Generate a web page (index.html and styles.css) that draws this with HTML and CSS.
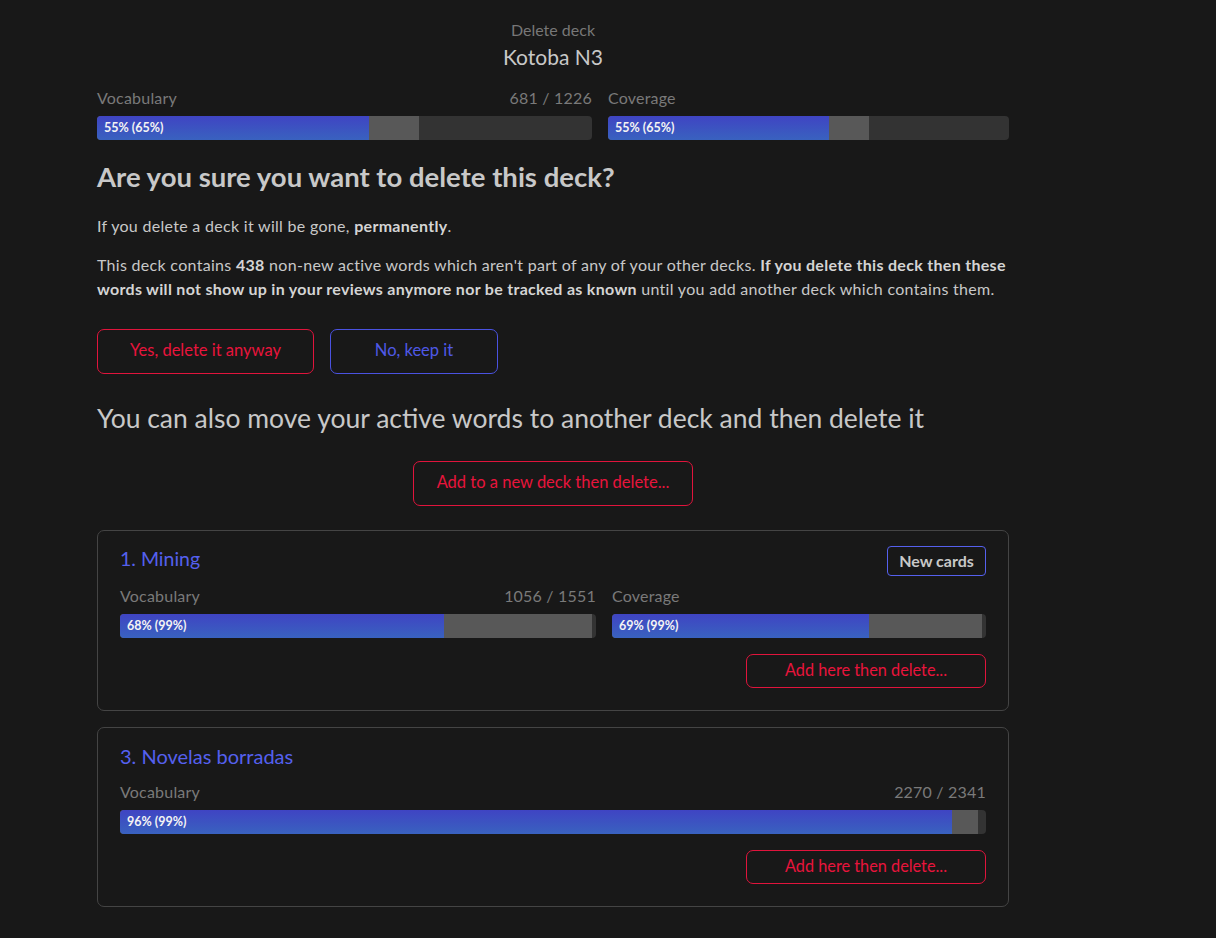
FILE: index.html
```html
<!DOCTYPE html>
<html lang="en">
<head>
<meta charset="utf-8">
<title>Delete deck</title>
<link rel="stylesheet" href="styles.css">
</head>
<body>
<main class="page">
  <header class="deck-head">
    <div class="deck-sub">Delete deck</div>
    <div class="deck-name">Kotoba N3</div>
  </header>

  <div class="stats">
    <div class="stat stat-vocab-top">
      <div class="stat-label"><span>Vocabulary</span><span>681 / 1226</span></div>
      <div class="bar">
        <div class="bar-known" style="width:65%"></div>
        <div class="bar-fill" style="width:55%"></div>
        <span class="bar-text">55% (65%)</span>
      </div>
    </div>
    <div class="stat stat-cov-top">
      <div class="stat-label"><span>Coverage</span></div>
      <div class="bar">
        <div class="bar-known" style="width:65%"></div>
        <div class="bar-fill" style="width:55%"></div>
        <span class="bar-text">55% (65%)</span>
      </div>
    </div>
  </div>

  <h1 class="title">Are you sure you want to delete this deck?</h1>
  <p class="para para-first">If you delete a deck it will be gone, <b>permanently</b>.</p>
  <p class="para">This deck contains <b>438</b> non-new active words which aren't part of any of your other decks. <b>If you delete this deck then these words will not show up in your reviews anymore nor be tracked as known</b> until you add another deck which contains them.</p>

  <div class="actions">
    <button class="btn btn-danger btn-yes">Yes, delete it anyway</button>
    <button class="btn btn-primary btn-no">No, keep it</button>
  </div>

  <h2 class="subtitle">You can also move your active words to another deck and then delete it</h2>

  <div class="center-row">
    <button class="btn btn-danger btn-newdeck">Add to a new deck then delete...</button>
  </div>

  <section class="card">
    <div class="card-head">
      <a class="card-title title-mining">1. Mining</a>
      <button class="btn-newcards">New cards</button>
    </div>
    <div class="stats">
      <div class="stat stat-vocab-card">
        <div class="stat-label"><span>Vocabulary</span><span>1056 / 1551</span></div>
        <div class="bar">
          <div class="bar-known" style="width:99.2%"></div>
          <div class="bar-fill" style="width:68%"></div>
          <span class="bar-text">68% (99%)</span>
        </div>
      </div>
      <div class="stat stat-cov-card">
        <div class="stat-label"><span>Coverage</span></div>
        <div class="bar">
          <div class="bar-known" style="width:99%"></div>
          <div class="bar-fill" style="width:68.8%"></div>
          <span class="bar-text">69% (99%)</span>
        </div>
      </div>
    </div>
    <div class="card-actions">
      <button class="btn btn-danger btn-addhere">Add here then delete...</button>
    </div>
  </section>

  <section class="card">
    <div class="card-head card-head-plain">
      <a class="card-title">3. Novelas borradas</a>
    </div>
    <div class="stats">
      <div class="stat stat-full">
        <div class="stat-label"><span>Vocabulary</span><span>2270 / 2341</span></div>
        <div class="bar">
          <div class="bar-known" style="width:99.1%"></div>
          <div class="bar-fill" style="width:96.1%"></div>
          <span class="bar-text">96% (99%)</span>
        </div>
      </div>
    </div>
    <div class="card-actions">
      <button class="btn btn-danger btn-addhere">Add here then delete...</button>
    </div>
  </section>
</main>
</body>
</html>
```

FILE: styles.css
```css
* { box-sizing: border-box; }

html, body {
  margin: 0;
  padding: 0;
  background: #181818;
}

body {
  font-family: Lato, "Noto Sans", sans-serif;
  color: #c8c8c8;
  font-size: 16px;
}

.page {
  width: 912px;
  margin-left: 97px;
  padding-top: 20px;
  padding-bottom: 30px;
}

.deck-head {
  text-align: center;
}

.deck-sub {
  font-size: 16px;
  line-height: 20px;
  color: #777;
}

.deck-name {
  font-size: 21px;
  line-height: 28px;
  margin-top: 3px;
  color: #c8c8c8;
}

.stats {
  display: flex;
  gap: 16px;
  margin-top: 16px;
}

.stat-vocab-top { flex: 0 0 495px; }
.stat-cov-top { flex: 1 1 auto; }
.stat-vocab-card { flex: 0 0 476px; }
.stat-cov-card { flex: 1 1 auto; }
.stat-full { flex: 1 1 auto; }

.stat-label {
  display: flex;
  justify-content: space-between;
  font-size: 16px;
  letter-spacing: 0.2px;
  line-height: 22px;
  color: #7a7a7a;
}

.bar {
  position: relative;
  height: 24px;
  margin-top: 7px;
  background: #333333;
  border-radius: 4px;
  overflow: hidden;
}

.bar-known {
  position: absolute;
  left: 0;
  top: 0;
  bottom: 0;
  background: #585858;
}

.bar-fill {
  position: absolute;
  left: 0;
  top: 0;
  bottom: 0;
  background: linear-gradient(to bottom, #3f44c3, #3962bf);
}

.bar-text {
  position: absolute;
  left: 7px;
  top: 0;
  line-height: 24px;
  font-size: 12.5px;
  font-weight: 700;
  color: #f4f4f4;
}

.title {
  margin: 20px 0 0;
  font-size: 27.5px;
  line-height: 34px;
  font-weight: 700;
  color: #c8c8c8;
}

.para {
  margin: 15px 0 0;
  font-size: 16px;
  letter-spacing: 0.3px;
  line-height: 24px;
  color: #c8c8c8;
}

.para-first { margin-top: 20px; }

.para b { font-weight: 700; color: #d4d4d4; }

.actions {
  display: flex;
  gap: 16px;
  margin-top: 28px;
}

.btn {
  height: 45px;
  background: transparent;
  border-radius: 7px;
  font-family: inherit;
  font-size: 16.5px;
  cursor: pointer;
  padding: 0 0 3px;
}

.btn-danger {
  border: 1px solid #e0143c;
  color: #e8143c;
}

.btn-primary {
  border: 1px solid #4a52e0;
  color: #4f58e6;
}

.btn-yes { width: 217px; }
.btn-no { width: 168px; }

.subtitle {
  margin: 27px 0 0;
  font-size: 26.5px;
  line-height: 34px;
  font-weight: 400;
  color: #c8c8c8;
}

.center-row {
  display: flex;
  justify-content: center;
  margin-top: 26px;
}

.btn-newdeck { width: 280px; }

.card {
  margin-top: 24px;
  border: 1px solid #444;
  border-radius: 7px;
  padding: 15px 22px 22px;
}

.card + .card { margin-top: 16px; }

.card-head {
  display: flex;
  justify-content: space-between;
  align-items: flex-start;
  min-height: 30px;
}

.card-head-plain { min-height: 29px; }

.card-title {
  font-size: 20px;
  line-height: 26px;
  color: #5560ee;
}

.title-mining { font-size: 19.5px; }

.btn-newcards {
  width: 99px;
  height: 30px;
  background: transparent;
  border: 1px solid #5560ee;
  border-radius: 4px;
  color: #c8c8c8;
  font-family: inherit;
  font-size: 16px;
  font-weight: 700;
  padding: 0 0 2px;
}

.card .stats { margin-top: 9px; }

.card-actions {
  display: flex;
  justify-content: flex-end;
  margin-top: 16px;
}

.btn-addhere {
  width: 240px;
  height: 34px;
  font-size: 16.3px;
}
```
